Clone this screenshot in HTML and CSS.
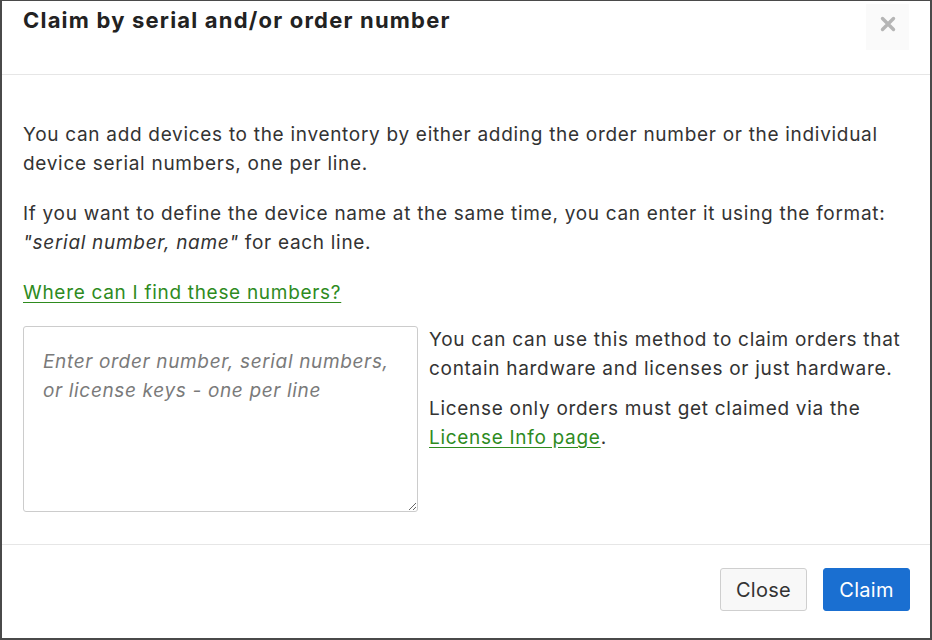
FILE: index.html
```html
<!DOCTYPE html>
<html lang="en">
<head>
<meta charset="utf-8">
<title>Claim by serial and/or order number</title>
<link rel="stylesheet" href="styles.css">
</head>
<body>
<div class="frame">
  <header class="modal-header">
    <h1 class="modal-title">Claim by serial and/or order number</h1>
    <button class="close-x" type="button" aria-label="Close">
      <svg class="close-icon" width="16" height="16" viewBox="0 0 16 16" aria-hidden="true">
        <path d="M2.5 2.5 L13.5 13.5 M13.5 2.5 L2.5 13.5" stroke="#b5b5b5" stroke-width="3.4" stroke-linecap="round"/>
      </svg>
    </button>
  </header>
  <main class="modal-body">
    <p class="para">You can add devices to the inventory by either adding the order number or the individual device serial numbers, one per line.</p>
    <p class="para">If you want to define the device name at the same time, you can enter it using the format: <em>"serial number, name"</em> for each line.</p>
    <p class="para"><a class="link" href="#">Where can I find these numbers?</a></p>
    <div class="claim-row">
      <textarea class="claim-input" placeholder="Enter order number, serial numbers, or license keys - one per line"></textarea>
      <div class="side-text">
        <p class="side-p">You can can use this method to claim orders that contain hardware and licenses or just hardware.</p>
        <p class="side-p">License only orders must get claimed via the <a class="link" href="#">License Info page</a>.</p>
      </div>
    </div>
  </main>
  <footer class="modal-footer">
    <button class="btn btn-close" type="button">Close</button>
    <button class="btn btn-claim" type="button">Claim</button>
  </footer>
</div>
</body>
</html>
```
FILE: styles.css
```css
html, body {
  margin: 0;
  padding: 0;
  background: #ffffff;
}
body {
  font-family: Inter, "Noto Sans", sans-serif;
  color: #333333;
}
.frame {
  box-sizing: border-box;
  width: 932px;
  height: 640px;
  border-style: solid;
  border-color: #4a4a4a;
  border-width: 1px 2px 2px 2px;
  display: flex;
  flex-direction: column;
  background: #fff;
}
.modal-header {
  box-sizing: border-box;
  height: 74px;
  border-bottom: 1px solid #e6e6e6;
  display: flex;
  justify-content: space-between;
  align-items: flex-start;
  padding: 0 21px 0 21px;
}
.modal-title {
  margin: 6px 0 0 0;
  font-size: 22px;
  line-height: 27px;
  font-weight: 700;
  color: #222222;
  letter-spacing: 1.2px;
}
.close-x {
  margin-top: 3px;
  width: 43px;
  height: 46px;
  border: none;
  background: #fafafa;
  padding: 0;
  display: flex;
  align-items: center;
  justify-content: center;
  cursor: pointer;
}
.close-icon {
  display: block;
  margin-bottom: 6px;
}
.modal-body {
  box-sizing: border-box;
  padding: 45px 20px 32px 21px;
  border-bottom: 1px solid #e6e6e6;
  font-size: 19px;
  line-height: 29px;
  letter-spacing: 0.7px;
}
.para {
  margin: 0 0 21px 0;
}
.para:nth-of-type(3) {
  margin-bottom: 19px;
}
em {
  font-style: italic;
}
.link {
  color: #2e8b1e;
  text-decoration: underline;
  text-underline-offset: 3px;
}
.claim-row {
  display: flex;
  gap: 11px;
  align-items: flex-start;
}
.claim-input {
  box-sizing: border-box;
  flex: 0 0 395px;
  width: 395px;
  height: 186px;
  border: 1px solid #cccccc;
  border-radius: 3px;
  padding: 20px 19px;
  font-family: Inter, "Noto Sans", sans-serif;
  font-size: 19px;
  line-height: 29px;
  letter-spacing: 0.65px;
  resize: vertical;
  color: #333;
}
.claim-input::placeholder {
  color: #7a7a7a;
  font-style: italic;
}
.side-text {
  flex: 1;
  margin-top: -1px;
}
.side-p {
  margin: 0 0 11px 0;
  line-height: 29px;
}
.modal-footer {
  flex: 1;
  display: flex;
  justify-content: flex-end;
  align-items: flex-start;
  gap: 16px;
  padding: 23px 20px 0 0;
}
.btn {
  box-sizing: border-box;
  width: 87px;
  height: 43px;
  border-radius: 3px;
  font-family: Inter, "Noto Sans", sans-serif;
  font-size: 20px;
  letter-spacing: 0.3px;
  cursor: pointer;
}
.btn-close {
  background: #f8f8f8;
  border: 1px solid #cfcfcf;
  color: #333333;
}
.btn-claim {
  background: #1a6fd1;
  border: 1px solid #1a6fd1;
  color: #ffffff;
}
```
